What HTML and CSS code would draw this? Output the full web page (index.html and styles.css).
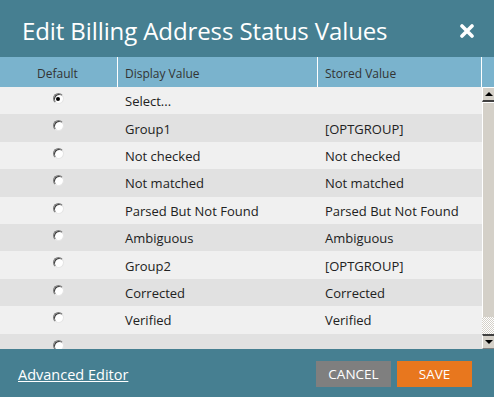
FILE: index.html
```html
<!DOCTYPE html>
<html>
<head>
<meta charset="utf-8">
<link rel="stylesheet" href="styles.css">
</head>
<body>
<div class="dialog">
  <div class="titlebar">
    <h1 class="title">Edit Billing Address Status Values</h1>
    <svg class="close" width="14" height="14" viewBox="0 0 14 14"><path d="M2 2 L12 12 M12 2 L2 12" stroke="#fff" stroke-width="3.6" stroke-linecap="round"/></svg>
  </div>
  <div class="thead">
    <div class="th th-default">Default</div>
    <div class="th th-display">Display Value</div>
    <div class="th th-stored">Stored Value</div>
    <div class="th th-extra"></div>
  </div>
  <div class="tbody">
    <div class="rows">
      <div class="row"><div class="c-default"><span class="radio checked"></span></div><div class="c-display">Select...</div><div class="c-stored"></div></div>
      <div class="row"><div class="c-default"><span class="radio"></span></div><div class="c-display">Group1</div><div class="c-stored">[OPTGROUP]</div></div>
      <div class="row"><div class="c-default"><span class="radio"></span></div><div class="c-display">Not checked</div><div class="c-stored">Not checked</div></div>
      <div class="row"><div class="c-default"><span class="radio"></span></div><div class="c-display">Not matched</div><div class="c-stored">Not matched</div></div>
      <div class="row"><div class="c-default"><span class="radio"></span></div><div class="c-display">Parsed But Not Found</div><div class="c-stored">Parsed But Not Found</div></div>
      <div class="row"><div class="c-default"><span class="radio"></span></div><div class="c-display">Ambiguous</div><div class="c-stored">Ambiguous</div></div>
      <div class="row"><div class="c-default"><span class="radio"></span></div><div class="c-display">Group2</div><div class="c-stored">[OPTGROUP]</div></div>
      <div class="row"><div class="c-default"><span class="radio"></span></div><div class="c-display">Corrected</div><div class="c-stored">Corrected</div></div>
      <div class="row"><div class="c-default"><span class="radio"></span></div><div class="c-display">Verified</div><div class="c-stored">Verified</div></div>
      <div class="row"><div class="c-default"><span class="radio"></span></div><div class="c-display"></div><div class="c-stored"></div></div>
    </div>
    <div class="scrollbar">
      <div class="sb-btn"><span class="arrow-up"></span></div>
      <div class="sb-thumb"></div>
      <div class="sb-track"></div>
      <div class="sb-btn"><span class="arrow-down"></span></div>
    </div>
  </div>
  <div class="footer">
    <a class="adv" href="#">Advanced Editor</a>
    <div class="buttons">
      <button class="btn cancel">CANCEL</button>
      <button class="btn save">SAVE</button>
    </div>
  </div>
</div>
</body>
</html>
```
FILE: styles.css
```css
* { box-sizing: border-box; }
html, body { margin: 0; padding: 0; }
body {
  width: 494px;
  height: 397px;
  overflow: hidden;
  font-family: "Open Sans", "DejaVu Sans", sans-serif;
  background: #467f91;
}
.dialog {
  width: 494px;
  height: 397px;
  display: flex;
  flex-direction: column;
}
.titlebar {
  height: 57px;
  background: #467f91;
  display: flex;
  align-items: center;
  justify-content: space-between;
  padding: 0 20px 0 22px;
}
.title {
  margin: 0;
  font-weight: normal;
  font-size: 24px;
  color: #fff;
  letter-spacing: -0.1px;
  padding-top: 4px;
}
.close { margin-top: 5px; }
.thead {
  height: 30px;
  background: #7ab3cd;
  display: flex;
  font-size: 12px;
  color: #333;
}
.th {
  display: flex;
  align-items: center;
  border-right: 1px solid #fff;
  padding-top: 2px;
}
.th-default { width: 118px; justify-content: center; padding-right: 2px; }
.th-display { width: 200px; padding-left: 7px; }
.th-stored { width: 164px; padding-left: 7px; }
.th-extra { flex: 1; border-right: none; }
.tbody {
  height: 262px;
  display: flex;
  overflow: hidden;
}
.rows {
  width: 482px;
  display: flex;
  flex-direction: column;
}
.row {
  height: 27.4px;
  flex: none;
  display: flex;
  align-items: center;
  font-size: 13px;
  color: #222;
  padding-top: 1px;
}
.row:nth-child(odd) { background: #f0f0f0; }
.row:nth-child(even) { background: #e1e1e1; }
.c-default { width: 118px; display: flex; justify-content: center; align-self: flex-start; padding-top: 5px; padding-right: 2px; }
.c-display { width: 200px; padding-left: 7px; }
.c-stored { width: 164px; padding-left: 7px; }
.radio {
  width: 11px;
  height: 11px;
  border-radius: 50%;
  background: #fff;
  border: 1px solid;
  border-color: #7c7c7c #e4e4e4 #e8e8e8 #7c7c7c;
  box-shadow: inset 1px 1px 0 #404040;
  position: relative;
}
.radio.checked::after {
  content: "";
  position: absolute;
  left: 2.5px;
  top: 2.5px;
  width: 4px;
  height: 4px;
  border-radius: 50%;
  background: #000;
}
.scrollbar {
  width: 12px;
  display: flex;
  flex-direction: column;
  background: #d4d0c8;
}
.sb-btn {
  height: 15px;
  background: #d4d0c8;
  border-top: 1px solid #fff;
  border-left: 1px solid #fff;
  border-bottom: 2px solid #404040;
  display: flex;
  align-items: center;
  justify-content: center;
}
.sb-btn:last-child { border-top: 2px solid #404040; border-bottom: 1px solid #808080; }
.arrow-up { width: 0; height: 0; border-left: 4px solid transparent; border-right: 4px solid transparent; border-bottom: 4px solid #000; }
.arrow-down { width: 0; height: 0; border-left: 4px solid transparent; border-right: 4px solid transparent; border-top: 4px solid #000; }
.sb-thumb {
  height: 215px;
  background: #d4d0c8;
  border-left: 1px solid #fff;
  border-top: 1px solid #fff;
}
.sb-track {
  flex: 1;
  background-color: #fff;
  background-image: repeating-conic-gradient(#d4d0c8 0 25%, #fff 0 50%);
  background-size: 2px 2px;
}
.footer {
  flex: 1;
  background: #467f91;
  display: flex;
  align-items: center;
  justify-content: space-between;
  padding: 2px 22px 0 18px;
}
.adv {
  color: #fff;
  font-size: 14.5px;
  text-decoration: underline;
}
.buttons { display: flex; gap: 6px; }
.btn {
  width: 75px;
  height: 26px;
  border: none;
  font-family: "Open Sans", "DejaVu Sans", sans-serif;
  font-size: 13.5px;
  color: #fff;
  padding: 0;
}
.cancel { background: #7f7f7f; }
.save { background: #e8771e; }
```
